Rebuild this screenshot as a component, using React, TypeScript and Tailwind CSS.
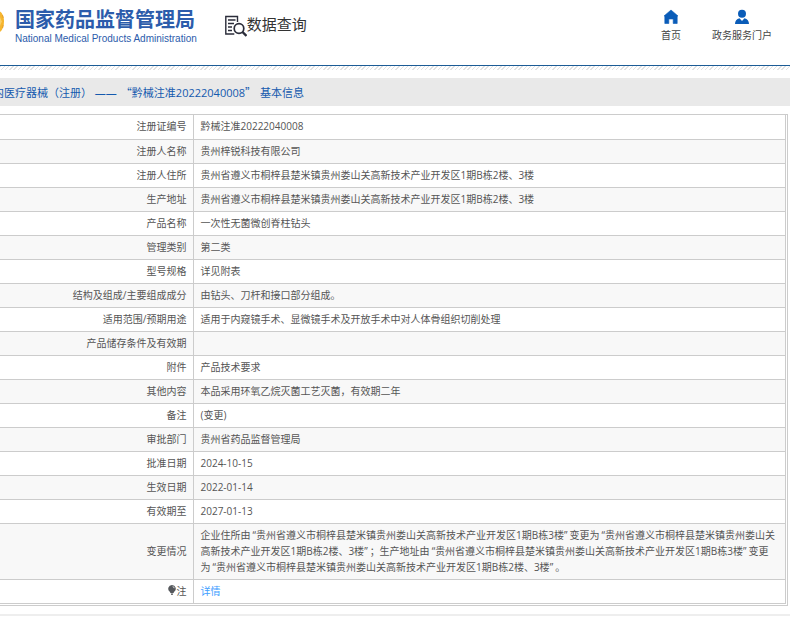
import React from 'react';

interface Row {
  label: React.ReactNode;
  value?: React.ReactNode;
}

const Quoted = ({ children }: { children: React.ReactNode }) => (
  <>
    <span className="pl-[2px]">“</span>
    {children}
    <span className="pr-[2px]">”</span>
  </>
);

const BulbIcon = () => (
  <svg viewBox="0 0 8 10" className="inline-block w-2 h-[10px] mb-[3px] mr-px align-middle" aria-hidden="true">
    <path d="M4 0a3.7 3.7 0 0 0-2.2 6.7L2.5 8h3l.7-1.3A3.7 3.7 0 0 0 4 0z" fill="#55585c" />
    <path d="M2.8 8.5h2.4L4.6 10H3.4z" fill="#55585c" />
    <path d="M4.6 1.4a2 2 0 0 1 1.6 1.8" stroke="#fff" strokeWidth=".7" fill="none" />
  </svg>
);

const rows: Row[] = [
  { label: '注册证编号', value: '黔械注准20222040008' },
  { label: '注册人名称', value: '贵州梓锐科技有限公司' },
  { label: '注册人住所', value: '贵州省遵义市桐梓县楚米镇贵州娄山关高新技术产业开发区1期B栋2楼、3楼' },
  { label: '生产地址', value: '贵州省遵义市桐梓县楚米镇贵州娄山关高新技术产业开发区1期B栋2楼、3楼' },
  { label: '产品名称', value: '一次性无菌微创脊柱钻头' },
  { label: '管理类别', value: '第二类' },
  { label: '型号规格', value: '详见附表' },
  { label: '结构及组成/主要组成成分', value: '由钻头、刀杆和接口部分组成。' },
  { label: '适用范围/预期用途', value: '适用于内窥镜手术、显微镜手术及开放手术中对人体骨组织切削处理' },
  { label: '产品储存条件及有效期' },
  { label: '附件', value: '产品技术要求' },
  { label: '其他内容', value: '本品采用环氧乙烷灭菌工艺灭菌，有效期二年' },
  { label: '备注', value: '(变更)' },
  { label: '审批部门', value: '贵州省药品监督管理局' },
  { label: '批准日期', value: '2024-10-15' },
  { label: '生效日期', value: '2022-01-14' },
  { label: '有效期至', value: '2027-01-13' },
  {
    label: '变更情况',
    value: (
      <>
        企业住所由<Quoted>贵州省遵义市桐梓县楚米镇贵州娄山关高新技术产业开发区1期B栋3楼</Quoted>变更为
        <Quoted>贵州省遵义市桐梓县楚米镇贵州娄山关高新技术产业开发区1期B栋2楼、3楼</Quoted>；生产地址由
        <Quoted>贵州省遵义市桐梓县楚米镇贵州娄山关高新技术产业开发区1期B栋3楼</Quoted>变更为
        <Quoted>贵州省遵义市桐梓县楚米镇贵州娄山关高新技术产业开发区1期B栋2楼、3楼</Quoted>。
      </>
    ),
  },
  {
    label: (
      <>
        <BulbIcon />注
      </>
    ),
    value: <a href="#detail" className="text-[#409eff]">详情</a>,
  },
];

const Header = () => (
  <header className="flex items-start h-[65px] pr-[18px]">
    <a href="#home" className="flex pt-2">
      <svg viewBox="0 0 4 32" className="w-1 h-8 mr-[11px]" aria-hidden="true">
        <path d="M0 3.500C2.500 5 4 9 4 13.500S2.500 22 0 24z" fill="#f6b62f" />
        <path d="M0 9l1.800 4.500L0 18z" fill="#f9cf6a" />
        <path d="M2.500 7l.8 3M2.600 20l.7-3" stroke="#d98a1c" strokeWidth=".6" />
      </svg>
      <span className="flex flex-col text-[#2c5cab]">
        <span className="text-[20px] leading-6 font-bold">国家药品监督管理局</span>
        <span className="font-['Liberation_Sans'] text-[10px] leading-[14px]">National Medical Products Administration</span>
      </span>
    </a>
    <div className="flex items-start mt-3 ml-[28px] text-[15px] leading-6 text-[#333]">
      <svg viewBox="0 0 22 22" className="w-[22px] h-[22px] mt-[3px]" fill="none" stroke="#2b2d3a" aria-hidden="true">
        <path d="M12.500 7V1.500H.8V19h8.500" strokeWidth="1.400" />
        <path d="M3 5h7.500M3 8.500h6M3 12h4M3 15.500h4" strokeWidth="1.300" />
        <circle cx="14" cy="13.500" r="4.800" strokeWidth="1.700" />
        <path d="M17.500 17l4 4" strokeWidth="2.400" />
      </svg>
      数据查询
    </div>
    <nav className="flex gap-[31px] ml-auto pt-[9px] text-[10px] leading-4 text-[#444]">
      <a href="#index" className="flex flex-col items-center gap-[2px]">
        <svg viewBox="0 0 16 16" className="w-4 h-4" fill="#0a5cb8" aria-hidden="true">
          <path d="M8 1L1 7H1.800V14.500H5.800V10h4.400v4.500h4V7H15z" stroke="#0a5cb8" strokeWidth=".6" strokeLinejoin="round" />
        </svg>
        首页
      </a>
      <a href="#portal" className="flex flex-col items-center gap-[2px]">
        <svg viewBox="0 0 16 16" className="w-4 h-4" fill="#0a5cb8" aria-hidden="true">
          <circle cx="8" cy="4.800" r="4" />
          <path d="M1 15c0-3.200 1.600-5 4.500-5.800L8 12l2.500-2.800c2.900.8 4.500 2.600 4.500 5.800z" />
        </svg>
        政务服务门户
      </a>
    </nav>
  </header>
);

export default function App() {
  return (
    <div className="bg-white overflow-hidden font-['Open_Sans','Noto_Sans_CJK_SC',sans-serif]">
      <Header />
      <div className="h-px bg-[#1c5c96]" />
      <div className="h-1 bg-[repeating-linear-gradient(135deg,#e2e2e2_0_1px,#fff_1px_3px)]" />
      <h1 className="mt-2 h-7 -ml-[18px] bg-[#e9e9e9] text-[11px] leading-7 text-[#1459ae] whitespace-nowrap">
        境内医疗器械（注册） ——
        <span className="ml-1 font-['Noto_Sans_CJK_SC']">“</span>黔械注准20222040008
        <span className="mr-1 font-['Noto_Sans_CJK_SC']">”</span>基本信息
      </h1>
      <div className="mt-2 mr-[2px] pr-px pb-px border border-l-0 border-[#ccc]">
        <table className="w-full border-collapse text-[10px] leading-4 text-[#555]">
          <tbody>
            {rows.map((row, i) => (
              <tr key={i} className="border-b border-[#ccc] even:bg-[#f8f8f8]">
                <th scope="row" className="w-[193px] h-6 pr-[6px] pt-[3px] pb-1 border-r border-[#ccc] text-right font-normal">
                  {row.label}
                </th>
                <td className="pl-[7px] pr-[6px] pt-[3px] pb-1 border-r border-[#ccc]">{row.value}</td>
              </tr>
            ))}
          </tbody>
        </table>
      </div>
      <footer className="mt-2 h-[2px] bg-[#eee]" />
    </div>
  );
}
